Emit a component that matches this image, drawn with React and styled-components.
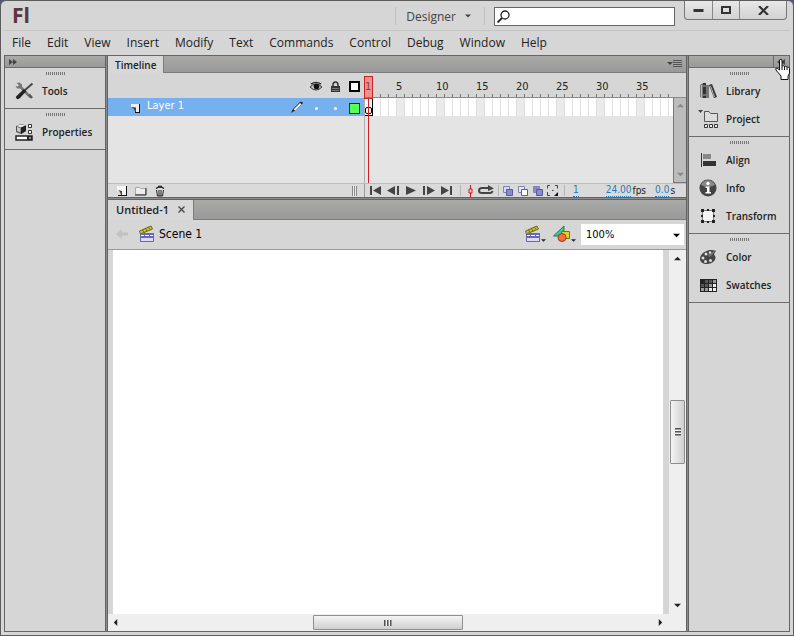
import { useState } from 'react';
import styled, { createGlobalStyle, css } from 'styled-components';

const GlobalStyle = createGlobalStyle`
  * {
    box-sizing: border-box;
  }

  body {
    margin: 0;
    background: #4d5878;
    font-family: 'Open Sans', 'Noto Sans', sans-serif;
    font-size: 12px;
    color: #222;
  }

  button, input, select {
    font: inherit;
    color: inherit;
    border: 0;
    padding: 0;
    background: none;
  }

  svg {
    display: block;
    flex: none;
  }
`;

const tahoma = css`
  font-family: 'DejaVu Sans Condensed', 'Noto Sans', sans-serif;
`;

const barGradient = 'linear-gradient(#a9a9a7, #999)';

const Window = styled.div`
  display: flex;
  flex-direction: column;
  min-height: 100vh;
  padding: 0 3px 3px;
  border: 1px solid #5c5c5c;
  border-radius: 6px 6px 0 0;
  background: #d6d6d6;
`;

const TitleBar = styled.header`
  display: flex;
  align-items: flex-start;
  height: 30px;
  border-bottom: 1px solid #c4c4c4;
`;

const Logo = styled.span`
  flex: 1;
  padding-left: 8px;
  font-size: 21px;
  line-height: 28px;
  font-weight: 700;
  color: #5b363e;
`;

const Workspace = styled.button`
  display: flex;
  align-items: center;
  gap: 9px;
  height: 18px;
  margin: 6px 9px 0 0;
  padding: 0 13px 0 10px;
  border: solid #bdbdbd;
  border-width: 0 1px;
  color: #444;
`;

const SearchBox = styled.label`
  display: flex;
  align-items: center;
  width: 181px;
  height: 19px;
  margin: 6px 9px 0 0;
  padding-left: 2px;
  border: 1px solid #666;
  background: #fff;

  input {
    flex: 1;
    min-width: 0;
    outline: none;
  }
`;

const WindowButtons = styled.div`
  display: flex;
  height: 19px;
  margin-right: 3px;
  border: 1px solid #777;
  border-top: 0;
  border-radius: 0 0 4px 4px;
  background: linear-gradient(#e8e8e8, #d2d2d2);
`;

const WindowButton = styled.button`
  display: flex;
  align-items: center;
  justify-content: center;
  width: ${({ $wide }) => ($wide ? 47 : 27)}px;

  & + & {
    border-left: 1px solid #888;
  }
`;

const MenuBar = styled.nav`
  display: flex;
  gap: 16px;
  height: 24px;
  padding-left: 8px;

  button {
    line-height: 22px;
  }
`;

const Panels = styled.main`
  display: flex;
  flex: 1;
  border: 1px solid #666;
`;

const Dock = styled.aside`
  flex: none;
  width: 100px;
`;

const DockHeader = styled.div`
  display: flex;
  justify-content: ${({ $right }) => ($right ? 'flex-end' : 'flex-start')};
  height: 12px;
  border-bottom: 1px solid #6c6c6c;
  background: ${barGradient};

  button {
    display: flex;
    align-items: center;
    justify-content: center;
    width: 16px;
    border-left: ${({ $right }) => ($right ? '1px solid #6c6c6c' : '0')};
  }
`;

const DockGroup = styled.section`
  padding: 4px 0 3px;
  border-bottom: 1px solid #6c6c6c;
`;

const Grip = styled.div`
  width: 19px;
  height: 3px;
  margin: 0 auto 2px;
  background: repeating-linear-gradient(90deg, #777 0 1px, transparent 1px 2px);
`;

const DockItem = styled.button`
  display: flex;
  align-items: center;
  gap: 9px;
  width: 100%;
  height: 28px;
  padding-left: 10px;
  font-size: 10px;
  font-weight: 600;
  color: #222;
`;

const Splitter = styled.div`
  flex: none;
  width: 3px;
  border: solid #636363;
  border-width: 0 1px;
  background: #8c8c8c;
`;

const Center = styled.div`
  display: flex;
  flex: 1;
  flex-direction: column;
  min-width: 0;
`;

const TabBar = styled.div`
  display: flex;
  align-items: stretch;
  flex: none;
  height: ${({ $tall }) => ($tall ? 20 : 17)}px;
  border-bottom: 1px solid #7c7c7c;
  background: ${barGradient};
`;

const Tab = styled.div`
  display: flex;
  align-items: center;
  gap: ${({ $large }) => ($large ? 9 : 0)}px;
  margin-bottom: -1px;
  padding: 0 ${({ $large }) => ($large ? 8 : 7)}px;
  padding-bottom: ${({ $large }) => ($large ? 2 : 0)}px;
  border-right: 1px solid #7c7c7c;
  background: #d8d8d8;
  font-size: ${({ $large }) => ($large ? 11 : 10)}px;
  font-weight: 600;
  color: #222;
`;

const PanelMenu = styled.button`
  margin: 0 4px 0 auto;
`;

const Timeline = styled.section`
  display: flex;
  flex: none;
  flex-direction: column;
  height: 141px;
`;

const TimelineBody = styled.div`
  display: flex;
  flex: 1;
  min-height: 0;
`;

const Layers = styled.div`
  flex: none;
  width: 256px;
  background: #e4e4e4;
`;

const LayerHead = styled.div`
  display: flex;
  justify-content: flex-end;
  height: 25px;
  padding-top: 2px;
  background: #d6d6d6;
`;

const LayerCell = styled.span`
  display: flex;
  align-items: center;
  justify-content: center;
  width: 19px;
`;

const LayerRow = styled.div`
  display: flex;
  height: 18px;
  padding-left: 21px;
  background: #76b0ee;
`;

const LayerName = styled.span`
  ${tahoma}
  flex: 1;
  font-size: 11px;
  line-height: 16px;
  color: #fff;
`;

const Dot = styled.i`
  width: 3px;
  height: 3px;
  margin-top: 2px;
  border-radius: 50%;
  background: #fff;
`;

const ColorChip = styled.i`
  width: 11px;
  height: 11px;
  margin-top: 2px;
  border: 1px solid #222;
  background: #5f5;
`;

const Frames = styled.div`
  position: relative;
  display: flex;
  flex: 1;
  flex-direction: column;
  min-width: 0;
  overflow: hidden;
`;

const Ruler = styled.div`
  ${tahoma}
  display: flex;
  flex: none;
  height: 25px;
  border-bottom: 1px solid #8a8a8a;
  background: repeating-linear-gradient(90deg, #777 0 1px, transparent 1px 8px) 16px 100% / calc(100% - 29px) 3px no-repeat;
  font-size: 11px;
  line-height: 27px;
  color: #222;
  overflow: hidden;

  span {
    flex: none;
    width: 40px;
  }
  span:first-child {
    width: 32px;
    padding-left: 1px;
  }
`;

const FrameArea = styled.div`
  display: flex;
  flex: 1;
`;

const FrameGrid = styled.div`
  flex: 1;
  min-width: 0;
  border-left: 1px solid #b0b0b0;
  background: #e4e4e4;
`;

const FrameRow = styled.div`
  height: 18px;
  background:
    repeating-linear-gradient(90deg, transparent 0 7px, #ddd 7px 8px),
    repeating-linear-gradient(90deg, #fff 0 31px, #ebebeb 31px 39px, #fff 39px 40px);
`;

const KeyFrame = styled.div`
  display: flex;
  align-items: flex-end;
  justify-content: center;
  width: 8px;
  height: 18px;
  padding-bottom: 1px;
  border: solid #000;
  border-width: 0 1px 1px 0;
  background: #fff;

  &::before {
    content: '';
    width: 5px;
    height: 5px;
    border: 1px solid #000;
    border-radius: 2px;
  }
`;

const PlayHead = styled.div`
  position: absolute;
  top: 3px;
  bottom: 0;
  left: 0;
  width: 9px;
  background: linear-gradient(#c22, #c22) 4px 21px / 1px 100% no-repeat;

  &::before {
    content: '';
    display: block;
    height: 21px;
    border: 1px solid #c22;
    background: rgba(255, 80, 80, .5);
  }
`;

const MiniScroll = styled.div`
  display: flex;
  flex-direction: column;
  justify-content: space-between;
  align-items: center;
  width: 13px;
  padding: 4px 0;
  border: solid #777;
  border-width: 0 0 1px 1px;
  background: #bcbcbc;
`;

const Footer = styled.div`
  display: flex;
  flex: none;
  height: 14px;
  border-top: 1px solid #bcbcbc;
  background: #dadada;
`;

const FooterLeft = styled.div`
  display: flex;
  flex: none;
  align-items: center;
  width: 257px;
  padding: 0 7px 0 4px;
  border-right: 1px solid #999;
`;

const FooterGrip = styled.i`
  width: 5px;
  height: 10px;
  margin-left: auto;
  background: repeating-linear-gradient(90deg, #888 0 1px, #eee 1px 2px);
`;

const FooterRight = styled.div`
  ${tahoma}
  display: flex;
  flex: 1;
  align-items: center;
  padding-left: 1px;
  font-size: 10px;
  line-height: 12px;
  white-space: nowrap;
`;

const ToolButton = styled.button`
  display: flex;
  align-items: center;
  justify-content: center;
  width: ${({ $width }) => $width}px;
`;

const MenuButton = styled.button`
  display: flex;
  align-items: flex-end;
  width: 28px;
`;

const Separator = styled.i`
  width: 1px;
  height: 11px;
  margin: 0 1px 0 4px;
  background: #b4b4b4;
`;

const HotValue = styled.a`
  margin-left: ${({ $gap }) => $gap}px;
  margin-right: 1px;
  border-bottom: 1px dotted #2a7ab5;
  color: #2a7ab5;
  text-decoration: none;
`;

const HSplit = styled.div`
  flex: none;
  height: 3px;
  border: solid #636363;
  border-width: 1px 0;
  background: #8c8c8c;
`;

const EditBar = styled.div`
  ${tahoma}
  display: flex;
  flex: none;
  align-items: center;
  height: 30px;
  padding: 0 2px 1px 5px;
  border-bottom: 1px solid #999;
  font-size: 12px;
  color: #000;
`;

const SceneLink = styled.a`
  display: flex;
  flex: 1;
  align-items: center;
  gap: 4px;
  margin-left: 7px;
  color: inherit;
  text-decoration: none;
`;

const Zoom = styled.label`
  position: relative;
  display: block;
  width: 103px;
  height: 21px;

  select {
    width: 100%;
    height: 100%;
    padding: 0 5px;
    appearance: none;
    border-radius: 0;
    background: #fff;
    font-size: 11px;
    outline: none;
  }
  svg {
    position: absolute;
    top: 8px;
    right: 4px;
    pointer-events: none;
  }
`;

const StageArea = styled.div`
  display: grid;
  flex: 1;
  grid-template: 1fr 17px / 1fr 17px;
`;

const Stage = styled.div`
  border: solid #d6d6d6;
  border-width: 0 6px 0 5px;
  background: #fff;
`;

const ScrollBar = styled.div`
  display: flex;
  flex-direction: ${({ $vertical }) => ($vertical ? 'column' : 'row')};
  align-items: center;
  justify-content: space-between;
  grid-column: ${({ $vertical }) => ($vertical ? 'auto' : '1 / 3')};
  padding: ${({ $vertical }) => ($vertical ? '5px 0 5px' : '0 22px 0 4px')};
  background: #efefef;
`;

const Thumb = styled.div`
  display: flex;
  align-items: center;
  justify-content: center;
  width: ${({ $vertical }) => ($vertical ? '15px' : '27%')};
  height: ${({ $vertical }) => ($vertical ? '18%' : '15px')};
  min-height: 15px;
  border: 1px solid #8e8e8e;
  border-radius: 1px;
  background: linear-gradient(${({ $vertical }) => ($vertical ? '90deg' : '180deg')}, #f4f4f4, #cfcfcf);

  &::before {
    content: '';
    width: ${({ $vertical }) => ($vertical ? 6 : 8)}px;
    height: ${({ $vertical }) => ($vertical ? 8 : 6)}px;
    background: repeating-linear-gradient(${({ $vertical }) => ($vertical ? '180deg' : '90deg')}, #555 0 1px, #999 1px 2px, #f4f4f4 2px 3px);
  }
`;

const Cursor = styled.svg`
  position: absolute;
  top: 58px;
  right: 3px;
  pointer-events: none;
`;

const Arrow = ({ dir = 'down', size = 7, color = '#222' }) => {
  const turn = { down: 0, left: 90, up: 180, right: 270 }[dir];
  return (
    <svg width={size} height={size} viewBox="0 0 8 8">
      <path d="M0 2h8L4 6z" fill={color} transform={`rotate(${turn} 4 4)`} />
    </svg>
  );
};

const Chevrons = ({ flip }) => (
  <svg width="9" height="6" viewBox="0 0 9 6">
    <path d={flip ? 'M4 0v6L0 3zM8 0v6L4 3z' : 'M0 0v6l4-3zM4 0v6l4-3z'} fill="#444" />
  </svg>
);

const icons = {
  Tools: (
    <>
      <path d="M1.500 1l3-.5 2.500 2v2L16 14l-1.500 2L5 6.500 2 6.500.5 4l2 .5L4 3z" fill="#777" />
      <path d="M17.500 1.500L10 8" stroke="#444" strokeWidth="1.800" />
      <path d="M9 7l2.500 2L5 16q-2 2-3.500.5T1.500 14z" fill="#222" />
      <path d="M14 12.500l3 3.500" stroke="#555" strokeWidth="2.500" />
    </>
  ),
  Properties: (
    <>
      <path d="M1 3l5-2 5 1.500V8L6 11 1 9z" fill="#555" />
      <path d="M1.500 3L6 1.500l4.500 1L6 4.500z" fill="#eee" />
      <path d="M6 4.500l5-2V8l-5 3z" fill="#222" />
      <path d="M2 4l3.500 1v4.500L2 8z" fill="#ccc" />
      <path d="M13.500 1.500h3v3h-3zM13.500 7.500h3v3h-3z" fill="#fff" stroke="#333" />
      <path d="M1 13h16v4H1z" fill="#fff" stroke="#222" strokeWidth="1.500" />
      <path d="M12 13h5v4h-5z" fill="#222" />
      <path d="M14 14.500h2v1h-2z" fill="#fff" />
    </>
  ),
  Library: (
    <>
      <path d="M1 3l3-2v15l-3-1z" fill="#777" />
      <path d="M4 1h3v15H4z" fill="#333" />
      <path d="M7 3h3v13H7z" fill="#777" />
      <path d="M10 3l3-1 5 13-3 1z" fill="#333" />
      <path d="M11.500 4l4 11M2.500 3v12" stroke="#bbb" />
      <path d="M4 4h3M4 13h3" stroke="#aaa" />
    </>
  ),
  Project: (
    <>
      <path d="M-1 0h5L1.500 3z" fill="#444" />
      <path d="M5.500 11.500v-10h4.500l1.500 2h7v8z" fill="#ddd" stroke="#555" />
      <path d="M5.500 14.500h3v3h-3zM10.500 14.500h3v3h-3zM15.500 14.500h3v3h-3z" fill="#eee" stroke="#333" />
    </>
  ),
  Align: (
    <>
      <path d="M2.500 2v14" stroke="#333" />
      <path d="M4 3h8v5H4z" fill="#888" />
      <path d="M4 10h13v5H4z" fill="#333" />
    </>
  ),
  Info: (
    <>
      <circle cx="9" cy="9" r="8.500" fill="#444" />
      <path d="M2 6a7.500 7.500 0 0 1 14 0q-7 4-14 0z" fill="#888" />
      <circle cx="9" cy="4.500" r="1.700" fill="#fff" />
      <path d="M6.500 7.500H10.500V13H12v1.500H6.500V13H8V9H6.500z" fill="#fff" />
    </>
  ),
  Transform: (
    <>
      <path d="M3.500 3.500h11v11h-11z" fill="#f4f4f4" stroke="#777" />
      <path d="M2 2h3v3H2zM13 2h3v3h-3zM2 13h3v3H2zM13 13h3v3h-3zM8 2h2v2H8zM8 14h2v2H8zM2 8h2v2H2zM14 8h2v2h-2z" fill="#222" />
    </>
  ),
  Color: (
    <>
      <path d="M1 11C1 6 7 2 12 2q3 0 5 1-3 3-1 5c2 3-2 8-8 8-4 0-7-2-7-5z" fill="#444" />
      <path d="M9 7l8-5-4 5-3 2z" fill="#777" />
      <g fill="#ddd">
        <circle cx="4" cy="10" r="1.500" />
        <circle cx="7" cy="6" r="1.500" />
        <circle cx="11" cy="4.500" r="1.300" />
        <circle cx="6.500" cy="13.500" r="1.500" />
        <circle cx="11.500" cy="12.500" r="1.500" />
      </g>
    </>
  ),
  Swatches: (
    <>
      <path d="M1 3h17v13H1z" fill="#222" />
      <path d="M2 8h3v3H2zM6 4h3v3H6zM10 4h3v3h-3zM6 8h3v3H6z" fill="#555" />
      <path d="M2 12h3v3H2zM10 8h3v3h-3zM14 4h3v3h-3zM6 12h3v3H6z" fill="#999" />
      <path d="M14 8h3v3h-3zM10 12h3v3h-3zM14 12h3v3h-3z" fill="#eee" />
    </>
  ),
};

const Clapper = () => (
  <svg width="16" height="18" viewBox="0 0 16 18">
    <path d="M.5 6L12 1l1.500 3L1.500 9z" fill="#c8c820" stroke="#66661a" />
    <path d="M3.500 5l1.500 2M6.500 3.500L8 6M9.500 2.500L11 4.500" stroke="#66661a" />
    <path d="M1 8h14v9H1z" fill="#6a68b0" />
    <path d="M2 10h3v1H2zM6 10h4v1H6zM11 10h3v1h-3z" fill="#fff" />
    <path d="M2 13h12v3H2z" fill="#dcdaf6" />
  </svg>
);

const Shapes = () => (
  <svg width="18" height="18" viewBox="0 0 18 18">
    <path d="M11 1v10H.5z" fill="#40c8a0" stroke="#187858" />
    <path d="M8.500 6.500h8v7h-8z" fill="#e0d020" stroke="#77701a" />
    <circle cx="9" cy="12.500" r="4" fill="#f07040" stroke="#a03818" />
  </svg>
);

const PLAYBACK = [
  { label: 'Go to first frame', d: 'M1 1h2v9H1zM12 1v9L4 5.500z' },
  { label: 'Step back one frame', d: 'M8 1v9L0 5.500zM10 1h2v9h-2z' },
  { label: 'Play', d: 'M1 1v9l10-4.500z' },
  { label: 'Step forward one frame', d: 'M0 1h2v9H0zM4 1v9l8-4.500z' },
  { label: 'Go to last frame', d: 'M0 1v9l8-4.500zM9 1h2v9H9z' },
];

const ONION = [
  { label: 'Onion skin', back: '#d8d6f4', front: '#8c8ac8' },
  { label: 'Onion skin outlines', back: '#e6e6f4', front: '#fff' },
  { label: 'Edit multiple frames', back: '#8c8ac8', front: '#8c8ac8' },
];

const MENUS = ['File', 'Edit', 'View', 'Insert', 'Modify', 'Text', 'Commands', 'Control', 'Debug', 'Window', 'Help'];

const RULER = [1, 5, 10, 15, 20, 25, 30, 35];

function DockColumn({ groups, right }) {
  return (
    <Dock>
      <DockHeader $right={right}>
        <button aria-label={right ? 'Expand right panels' : 'Expand left panels'}>
          <Chevrons flip={right} />
        </button>
      </DockHeader>
      {groups.map((items) => (
        <DockGroup key={items[0]}>
          <Grip />
          {items.map((name) => (
            <DockItem key={name}>
              <svg width="18" height="18" viewBox="0 0 18 18" fill="none" overflow="visible">{icons[name]}</svg>
              {name}
            </DockItem>
          ))}
        </DockGroup>
      ))}
    </Dock>
  );
}

function TimelinePanel() {
  return (
    <Timeline>
      <TabBar>
        <Tab>Timeline</Tab>
        <PanelMenu aria-label="Panel menu">
          <svg width="15" height="8" viewBox="0 0 15 8">
            <path d="M0 2h6L3 5z" fill="#444" />
            <path d="M6 .5h9M6 2.500h9M6 4.500h9M6 6.500h9" stroke="#555" />
          </svg>
        </PanelMenu>
      </TabBar>
      <TimelineBody>
        <Layers>
          <LayerHead>
            <LayerCell>
              <svg width="13" height="11" viewBox="0 0 13 11" fill="none">
                <path d="M0 6q6-6 12 0-6 6-12 0z" fill="#ccc" stroke="#333" />
                <circle cx="6.500" cy="5.500" r="2.800" fill="#111" />
                <path d="M1 3q5-3 10 0" stroke="#333" strokeWidth="1.500" />
              </svg>
            </LayerCell>
            <LayerCell>
              <svg width="11" height="12" viewBox="0 0 11 12" fill="none">
                <path d="M3 6V4q0-3 2.500-3T8 4v2" stroke="#333" strokeWidth="1.500" />
                <path d="M1 5h9v6H1z" fill="#333" />
                <path d="M2 7.500h7M2 9.500h7" stroke="#777" />
              </svg>
            </LayerCell>
            <LayerCell>
              <svg width="11" height="11" viewBox="0 0 11 11">
                <path d="M1 1h9v9H1z" fill="#fff" stroke="#000" strokeWidth="2" />
              </svg>
            </LayerCell>
          </LayerHead>
          <LayerRow>
            <svg width="18" height="18" viewBox="0 0 18 18">
              <path d="M2 6h8v8H7L6 10 2 9z" fill="#eee" />
              <path d="M2 9l5 .5V14H6l-1-3z" fill="#444" />
              <path d="M10 6h1v9H6v-1h4z" fill="#111" />
            </svg>
            <LayerName>Layer 1</LayerName>
            <LayerCell>
              <svg width="14" height="14" viewBox="0 0 14 14">
                <path d="M0 13l2-4 7-7q2-1 3 1L5 10z" fill="#222" />
                <path d="M2.500 9.500L9 3l1.500 1.300L4.500 10.500z" fill="#eee" />
              </svg>
            </LayerCell>
            <LayerCell><Dot /></LayerCell>
            <LayerCell><Dot /></LayerCell>
            <LayerCell><ColorChip /></LayerCell>
          </LayerRow>
        </Layers>
        <Frames>
          <Ruler>
            {RULER.map((n) => <span key={n}>{n}</span>)}
          </Ruler>
          <FrameArea>
            <FrameGrid>
              <FrameRow><KeyFrame /></FrameRow>
            </FrameGrid>
            <MiniScroll>
              <Arrow dir="up" color="#888" />
              <Arrow color="#888" />
            </MiniScroll>
          </FrameArea>
          <PlayHead />
        </Frames>
      </TimelineBody>
      <Footer>
        <FooterLeft>
          <ToolButton $width={19} aria-label="New layer">
            <svg width="10" height="11" viewBox="0 0 10 11">
              <path d="M0 1h9v9H4L3 7 0 6z" fill="#f6f6f6" />
              <path d="M9 1h1v10H1v-1h8z" fill="#111" />
              <path d="M1 5l4 1v4H4L3 7z" fill="#444" />
            </svg>
          </ToolButton>
          <ToolButton $width={19} aria-label="New folder">
            <svg width="12" height="10" viewBox="0 0 12 10">
              <path d="M.5 8.500v-7h4l1 1h5v6z" fill="#eee" stroke="#aaa" />
              <path d="M11 2v7H0" fill="none" stroke="#222" />
            </svg>
          </ToolButton>
          <ToolButton $width={19} aria-label="Delete">
            <svg width="10" height="12" viewBox="0 0 10 12" fill="none" stroke="#222">
              <path d="M1 3.500q4-3 8 0M3 1.500h4" strokeWidth="1.500" />
              <path d="M1.500 5l1 6h5l1-6M4 5v6M6 5v6" />
            </svg>
          </ToolButton>
          <FooterGrip />
        </FooterLeft>
        <FooterRight>
          {PLAYBACK.map(({ label, d }) => (
            <ToolButton key={label} $width={18} aria-label={label}>
              <svg width="12" height="11" viewBox="0 0 12 11"><path d={d} fill="#444" /></svg>
            </ToolButton>
          ))}
          <Separator />
          <ToolButton $width={16} aria-label="Center frame">
            <svg width="5" height="12" viewBox="0 0 5 12" fill="none" stroke="#d11">
              <path d="M2.500 0v4M2.500 8v4M1 4h3v4H1z" />
            </svg>
          </ToolButton>
          <ToolButton $width={16} aria-label="Loop">
            <svg width="16" height="11" viewBox="0 0 16 11">
              <path d="M6 8H4Q1 8 1 5.500T4 3h7" fill="none" stroke="#444" strokeWidth="2" />
              <path d="M6 8h6q2 0 2.500-2" fill="none" stroke="#444" strokeWidth="2" />
              <path d="M10 0l6 3.500L10 6z" fill="#444" />
            </svg>
          </ToolButton>
          <Separator />
          {ONION.map(({ label, back, front }) => (
            <ToolButton key={label} $width={15} aria-label={label}>
              <svg width="10" height="10" viewBox="0 0 10 10">
                <path d="M.5.5h6v6h-6z" fill={back} stroke="#8280b8" />
                <path d="M3.500 3.500h6v6h-6z" fill={front} stroke="#5a58a0" />
              </svg>
            </ToolButton>
          ))}
          <ToolButton $width={15} aria-label="Modify markers">
            <svg width="11" height="11" viewBox="0 0 11 11" fill="none" stroke="#444">
              <path d="M3 .5H.5v3M.5 7v3.500H3M8 .5h2.500v3M5 5.500h1.500" />
              <path d="M11 7v4H7z" fill="#111" stroke="none" />
            </svg>
          </ToolButton>
          <Separator />
          <HotValue $gap={7} href="#frame">1</HotValue>
          <HotValue $gap={26} href="#rate">24.00</HotValue>fps
          <HotValue $gap={9} href="#time">0.0</HotValue>s
        </FooterRight>
      </Footer>
    </Timeline>
  );
}

function DocumentPanel() {
  const [zoom, setZoom] = useState('100%');

  return (
    <>
      <TabBar $tall>
        <Tab $large>
          Untitled-1
          <button aria-label="Close document">
            <svg width="7" height="7" viewBox="0 0 7 7">
              <path d="M.5.5l6 6M6.500.5l-6 6" stroke="#444" strokeWidth="1.300" />
            </svg>
          </button>
        </Tab>
      </TabBar>
      <EditBar>
        <ToolButton $width={19} aria-label="Back">
          <svg width="13" height="12" viewBox="0 0 13 12">
            <path d="M0 6l6-5v3.500h6v3H6V11z" fill="#c2c2c2" />
          </svg>
        </ToolButton>
        <SceneLink href="#scene"><Clapper />Scene 1</SceneLink>
        <MenuButton aria-label="Edit scene">
          <Clapper /><Arrow size={5} />
        </MenuButton>
        <MenuButton aria-label="Edit symbols">
          <Shapes /><Arrow size={5} />
        </MenuButton>
        <Zoom>
          <select aria-label="Zoom" value={zoom} onChange={(e) => setZoom(e.target.value)}>
            <option>50%</option>
            <option>100%</option>
            <option>200%</option>
          </select>
          <Arrow color="#000" />
        </Zoom>
      </EditBar>
      <StageArea>
        <Stage />
        <ScrollBar $vertical>
          <Arrow dir="up" />
          <Thumb $vertical />
          <Arrow />
        </ScrollBar>
        <ScrollBar>
          <Arrow dir="left" />
          <Thumb />
          <Arrow dir="right" />
        </ScrollBar>
      </StageArea>
    </>
  );
}

export default function App() {
  return (
    <>
      <GlobalStyle />
      <Window>
        <TitleBar>
          <Logo>Fl</Logo>
          <Workspace>Designer <Arrow size={6} color="#444" /></Workspace>
          <SearchBox>
            <svg width="13" height="13" viewBox="0 0 13 13" fill="none" stroke="#222">
              <circle cx="8" cy="5" r="4" strokeWidth="1.300" />
              <path d="M5 8l-4.500 4.500" strokeWidth="1.800" />
            </svg>
            <input type="text" aria-label="Search" />
          </SearchBox>
          <WindowButtons>
            <WindowButton aria-label="Minimize">
              <svg width="11" height="4" viewBox="0 0 11 4"><path d="M.5 1h10v3H.5z" fill="#333" /></svg>
            </WindowButton>
            <WindowButton aria-label="Maximize">
              <svg width="10" height="8" viewBox="0 0 10 8">
                <path d="M1 1h8v6H1z" fill="none" stroke="#333" strokeWidth="2" />
              </svg>
            </WindowButton>
            <WindowButton $wide aria-label="Close">
              <svg width="11" height="9" viewBox="0 0 11 9">
                <path d="M1 0l9 9M10 0L1 9" stroke="#333" strokeWidth="2.200" />
              </svg>
            </WindowButton>
          </WindowButtons>
        </TitleBar>
        <MenuBar>
          {MENUS.map((name) => <button key={name}>{name}</button>)}
        </MenuBar>
        <Panels>
          <DockColumn groups={[['Tools'], ['Properties']]} />
          <Splitter />
          <Center>
            <TimelinePanel />
            <HSplit />
            <DocumentPanel />
          </Center>
          <Splitter />
          <DockColumn
            right
            groups={[['Library', 'Project'], ['Align', 'Info', 'Transform'], ['Color', 'Swatches']]}
          />
        </Panels>
      </Window>
      <Cursor width="17" height="23" viewBox="0 0 17 23">
        <path
          d="M5.500 2Q7 .5 8 2v6q1.500-1 2.500.5 1.500-.8 2.500.7 2-.5 2.500 1v5L14 18v3.500H7V18L2 12q-1-2 1-2l2.500 2z"
          fill="#fff"
          stroke="#111"
        />
        <path d="M8 8v4M10.500 8.500V12M13 9.500V12" stroke="#111" />
      </Cursor>
    </>
  );
}
